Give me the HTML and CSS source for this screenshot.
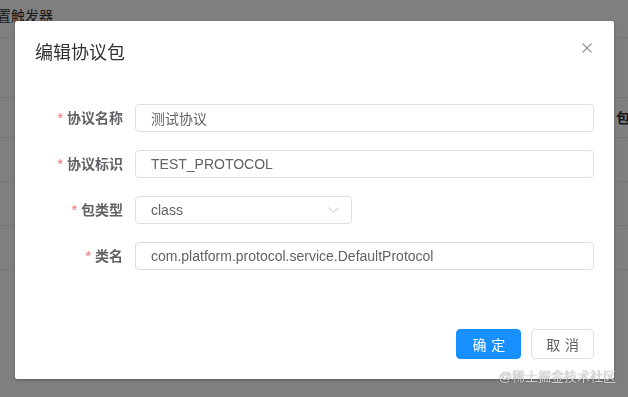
FILE: index.html
```html
<!DOCTYPE html>
<html lang="zh-CN">
<head>
  <meta charset="UTF-8">
  <meta name="viewport" content="width=device-width, initial-scale=1.0">
  <title>编辑协议包</title>
  <link rel="stylesheet" href="styles.css">
</head>
<body>
  <div class="page">
    <div class="toolbar"><span class="toolbar-link">置触发器</span></div>
    <div class="filter"></div>
    <div class="table">
      <div class="row head"><span></span><span>包名</span></div>
      <div class="row"><span></span><span></span></div>
      <div class="row"><span></span><span></span></div>
      <div class="row"><span></span><span></span></div>
    </div>
  </div>

  <div class="mask"></div>

  <div class="dialog-wrap">
    <div class="dialog">
      <div class="dialog-header">
        <span class="dialog-title">编辑协议包</span>
        <button class="dialog-close" title="关闭">
          <svg width="10" height="10" viewBox="0 0 10 10">
            <path d="M0.5 0.5 L9.5 9.5 M9.5 0.5 L0.5 9.5" stroke="#909399" stroke-width="1.1" fill="none"/>
          </svg>
        </button>
      </div>

      <div class="dialog-body">
        <form class="form">
          <div class="form-item">
            <label class="form-label required">协议名称</label>
            <div class="form-content">
              <input class="input" type="text" value="测试协议">
            </div>
          </div>
          <div class="form-item">
            <label class="form-label required">协议标识</label>
            <div class="form-content">
              <input class="input" type="text" value="TEST_PROTOCOL">
            </div>
          </div>
          <div class="form-item">
            <label class="form-label required">包类型</label>
            <div class="form-content">
              <div class="select">
                <span class="select-value">class</span>
                <svg class="select-arrow" width="11" height="6" viewBox="0 0 11 6">
                  <path d="M0.5 0.5 L5.5 5.3 L10.5 0.5" stroke="#c0c4cc" stroke-width="1" fill="none"/>
                </svg>
              </div>
            </div>
          </div>
          <div class="form-item">
            <label class="form-label required">类名</label>
            <div class="form-content">
              <input class="input" type="text" value="com.platform.protocol.service.DefaultProtocol">
            </div>
          </div>
        </form>
      </div>

      <div class="dialog-footer">
        <button class="btn btn-primary"><span>确定</span></button>
        <button class="btn"><span>取消</span></button>
      </div>
    </div>
  </div>

  <div class="watermark">@稀土掘金技术社区</div>
</body>
</html>
```

FILE: styles.css
```css
body{
  margin: 0;
  font-family: "Liberation Sans", "Noto Sans CJK SC", sans-serif;
  color: #606266;
  background: #fff;
  overflow: hidden;
}

/* page behind the dialog */
.page{
  height: 397px;
}
.toolbar{
  height: 37px;
  border-bottom: 1px solid #ebeef5;
  font-size: 14px;
  line-height: 32px;
  color: #303133;
  white-space: nowrap;
}
.toolbar-link{
  margin-left: -3px;
}
.filter{
  height: 59px;
  border-bottom: 1px solid #ebeef5;
}
.row{
  display: grid;
  grid-template-columns: 616px 1fr;
  height: 43px;
  border-bottom: 1px solid #ebeef5;
  font-size: 14px;
  line-height: 40px;
  color: #303133;
  white-space: nowrap;
  overflow: hidden;
}
.row.head{
  height: 39px;
  font-weight: bold;
}

.mask{
  position: fixed;
  inset: 0;
  background: rgba(0, 0, 0, 0.5);
}

/* dialog */
.dialog-wrap{
  position: fixed;
  inset: 0;
}
.dialog{
  width: 599px;
  margin: 21px 0 0 15px;
  background: #fff;
  border-radius: 2px;
  box-shadow: 0 1px 3px rgba(0, 0, 0, 0.3);
  position: relative;
}
.dialog-header{
  padding: 20px 20px 10px;
}
.dialog-title{
  font-size: 18px;
  line-height: 24px;
  color: #303133;
}
.dialog-close{
  position: absolute;
  top: 22px;
  right: 22px;
  padding: 0;
  border: 0;
  background: none;
  width: 10px;
  height: 10px;
  display: flex;
}
.dialog-body{
  padding: 29px 20px 30px;
}

.form-item{
  display: flex;
  margin-bottom: 18px;
}
.form-label{
  width: 100px;
  box-sizing: border-box;
  padding-right: 12px;
  text-align: right;
  font-size: 14px;
  line-height: 28px;
  font-weight: bold;
  color: #606266;
}
.form-label.required::before{
  content: "*";
  color: #f56c6c;
  margin-right: 4px;
  font-weight: normal;
}
.form-content{
  flex: 1;
}
.input{
  display: block;
  width: 100%;
  box-sizing: border-box;
  height: 28px;
  padding: 0 15px;
  border: 1px solid #dcdfe6;
  border-radius: 4px;
  font-family: inherit;
  font-size: 14px;
  color: #606266;
  outline: none;
}
.select{
  width: 217px;
  height: 28px;
  box-sizing: border-box;
  border: 1px solid #dcdfe6;
  border-radius: 4px;
  padding: 0 12px 0 15px;
  display: flex;
  align-items: center;
  justify-content: space-between;
  font-size: 14px;
}

.dialog-footer{
  padding: 11px 20px 20px;
  display: flex;
  justify-content: flex-end;
  gap: 10px;
}
.btn{
  height: 30px;
  padding: 0 14px;
  border: 1px solid #dcdfe6;
  border-radius: 4px;
  background: #fff;
  color: #606266;
  font-family: inherit;
  font-size: 14px;
  white-space: nowrap;
}
.btn span{
  letter-spacing: 0.34em;
  margin-right: -0.34em;
}
.btn-primary{
  padding: 0 15px;
  background: #1890ff;
  border-color: #1890ff;
  color: #fff;
}

.watermark{
  position: fixed;
  right: 12px;
  bottom: 12px;
  font-size: 13px;
  color: rgba(255, 255, 255, 0.75);
  text-shadow: 0 0 1px rgba(0, 0, 0, 0.6);
  white-space: nowrap;
}
```
